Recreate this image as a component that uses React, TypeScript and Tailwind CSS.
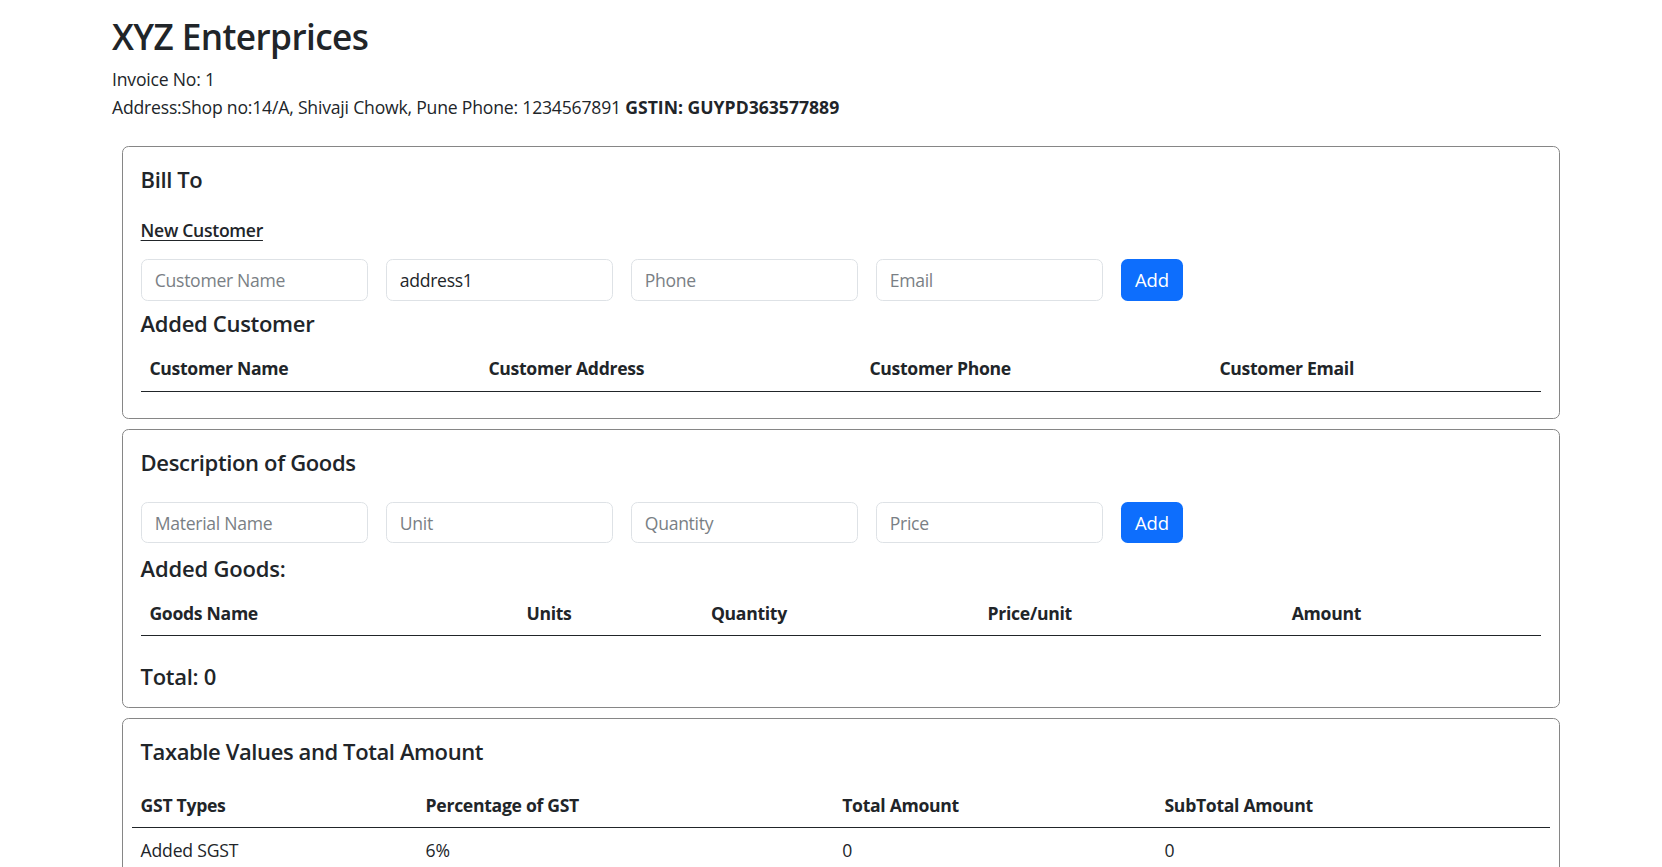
import React from "react";

function HeaderRow({ cols, grid }: { cols: string[]; grid: string }) {
  return (
    <div className={`grid ${grid} border-b border-[#212529]`}>
      {cols.map((c) => (
        <div key={c} className="px-[8.8px] py-[8.8px] font-bold tracking-[-0.3px] text-[#212529]">
          {c}
        </div>
      ))}
    </div>
  );
}

function Field({ placeholder, value }: { placeholder: string; value?: string }) {
  return (
    <input
      className="w-[227px] h-[41.4px] shrink-0 rounded-[6.6px] border border-[#dee2e6] bg-white px-[13.2px] text-[17.6px] tracking-[-0.3px] text-[#212529] placeholder:text-[#7a7f85] outline-none"
      placeholder={placeholder}
      defaultValue={value}
    />
  );
}

function AddButton() {
  return (
    <button className="flex h-[41.4px] w-[62.6px] shrink-0 items-center justify-center rounded-[6.6px] bg-[#0d6efd] text-[18.5px] text-white">
      Add
    </button>
  );
}

export default function App() {
  return (
    <div className="min-h-screen bg-white font-['Open_Sans',_'Noto_Sans',_sans-serif] text-[17.6px] leading-[26.4px] tracking-[-0.2px] text-[#212529]">
      <header className="pl-[112px] pt-[15px]">
        <h2 className="mb-[9px] text-[35.2px] font-semibold leading-[42px] tracking-[-0.6px]">XYZ Enterprices</h2>
        <p>Invoice No: 1</p>
        <p className="mt-[2px]">
          Address:Shop no:14/A, Shivaji Chowk, Pune Phone: 1234567891{" "}
          <span className="font-bold tracking-normal">GSTIN: GUYPD363577889</span>
        </p>
      </header>

      <main className="ml-[122px] mt-[25px] flex w-[1438px] flex-col gap-[10px] pb-[40px]">
        {/* Bill To */}
        <section className="rounded-[6.6px] border border-[#868686] px-[17.6px] pt-[19.6px] pb-[26px]">
          <h5 className="mb-[24px] text-[22px] font-semibold leading-[26.4px] tracking-[-0.4px]">Bill To</h5>
          <p className="mb-[16px] font-semibold tracking-[-0.3px] underline underline-offset-[3px]">New Customer</p>
          <div className="mb-[7.2px] flex gap-[18px]">
            <Field placeholder="Customer Name" />
            <Field placeholder="Address" value="address1" />
            <Field placeholder="Phone" />
            <Field placeholder="Email" />
            <AddButton />
          </div>
          <h4 className="mb-[7.1px] text-[22px] font-semibold leading-[31.7px] tracking-[-0.3px]">Added Customer</h4>
          <HeaderRow
            grid="grid-cols-[339px_381px_350px_1fr]"
            cols={["Customer Name", "Customer Address", "Customer Phone", "Customer Email"]}
          />
        </section>

        {/* Description of Goods */}
        <section className="rounded-[6.6px] border border-[#868686] px-[17.6px] pt-[19.6px] pb-[14.4px]">
          <h5 className="mb-[26.5px] text-[22px] font-semibold leading-[26.4px] tracking-[-0.35px]">Description of Goods</h5>
          <div className="mb-[10px] flex gap-[18px]">
            <Field placeholder="Material Name" />
            <Field placeholder="Unit" />
            <Field placeholder="Quantity" />
            <Field placeholder="Price" />
            <AddButton />
          </div>
          <h4 className="mb-[6.1px] text-[22px] font-semibold leading-[31.7px] tracking-[-0.2px]">Added Goods:</h4>
          <HeaderRow
            grid="grid-cols-[377px_184.5px_276.7px_304.2px_1fr]"
            cols={["Goods Name", "Units", "Quantity", "Price/unit", "Amount"]}
          />
          <h4 className="mt-[24.6px] text-[22px] font-semibold leading-[31.7px] tracking-[-0.3px]">Total: 0</h4>
        </section>

        {/* Taxable values */}
        <section className="rounded-[6.6px] border border-[#868686] px-[8.8px] pt-[18.6px] pb-[17.6px]">
          <h5 className="mb-[19.5px] pl-[8.8px] text-[22px] font-semibold leading-[26.4px] tracking-[-0.4px]">
            Taxable Values and Total Amount
          </h5>
          <HeaderRow
            grid="grid-cols-[285px_416.6px_322.3px_1fr]"
            cols={["GST Types", "Percentage of GST", "Total Amount", "SubTotal Amount"]}
          />
          <div className="grid grid-cols-[285px_416.6px_322.3px_1fr] border-b border-[#dee2e6]">
            {["Added SGST", "6%", "0", "0"].map((v, i) => (
              <div key={i} className="px-[8.8px] py-[8.8px]">
                {v}
              </div>
            ))}
          </div>
        </section>
      </main>
    </div>
  );
}
